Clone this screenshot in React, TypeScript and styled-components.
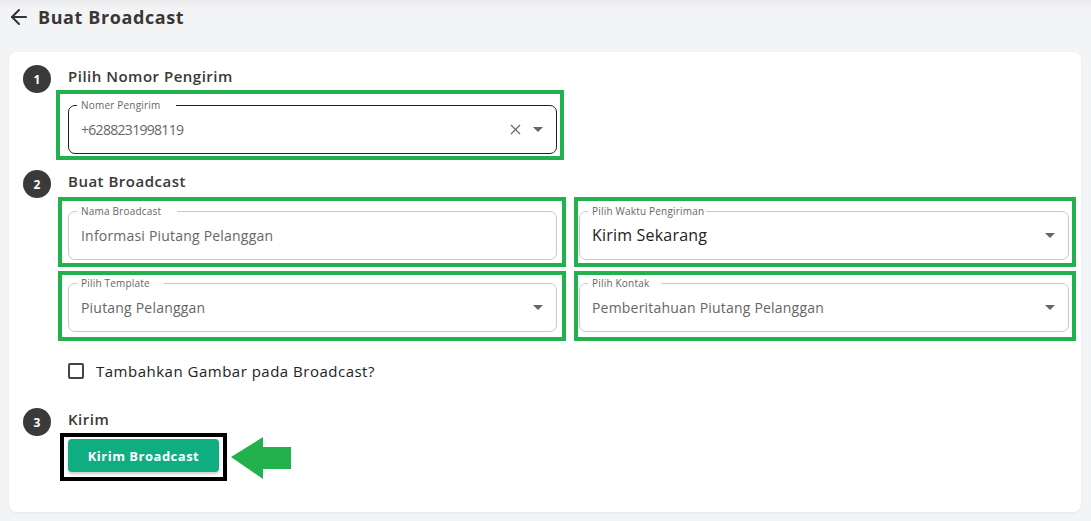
import React from 'react';
import styled, { createGlobalStyle } from 'styled-components';
import { ArrowLeft, X } from 'lucide-react';

const GlobalStyle = createGlobalStyle`
  body {
    margin: 0;
    background: #f3f4f6;
    font-family: "Open Sans", "Liberation Sans", sans-serif;
    color: #333;
  }
`;

const App = () => {
    return (
        <Page>
            <GlobalStyle />
            <Header>
                <BackButton><ArrowLeft size={24} strokeWidth={2} /></BackButton>
                <Title>Buat Broadcast</Title>
            </Header>

            <Card>
                <Step>
                    <StepNumber>1</StepNumber>
                    <StepBody>
                        <StepTitle>Pilih Nomor Pengirim</StepTitle>
                        <GreenBox $w={508} $pad="5px 3px 2px 8px" $ml={-12}>
                            <Field $dark $pl={12}>
                                <Legend $notch={15}>Nomer Pengirim</Legend>
                                <Value $tight>+6288231998119</Value>
                                <Icons>
                                    <X size={17} strokeWidth={1.6} color="#666" />
                                    <Caret />
                                </Icons>
                            </Field>
                        </GreenBox>
                    </StepBody>
                </Step>

                <Step>
                    <StepNumber>2</StepNumber>
                    <StepBody>
                        <StepTitle>Buat Broadcast</StepTitle>
                        <FieldGrid>
                            <GreenBox $pad="4px 5px 3px 6px">
                                <Field $pl={12}>
                                    <Legend $notch={16}>Nama Broadcast</Legend>
                                    <Value>Informasi Piutang Pelanggan</Value>
                                </Field>
                            </GreenBox>
                            <GreenBox $pad="4px 3px 3px 1px">
                                <Field $pl={12}>
                                    <Legend $notch={2}>Pilih Waktu Pengiriman</Legend>
                                    <Value $strong>Kirim Sekarang</Value>
                                    <Icons><Caret /></Icons>
                                </Field>
                            </GreenBox>
                            <GreenBox $pad="2px 5px 5px 6px">
                                <Field $pl={12}>
                                    <Legend $notch={14}>Pilih Template</Legend>
                                    <Value>Piutang Pelanggan</Value>
                                    <Icons><Caret /></Icons>
                                </Field>
                            </GreenBox>
                            <GreenBox $pad="2px 3px 5px 1px">
                                <Field $pl={12}>
                                    <Legend $notch={12}>Pilih Kontak</Legend>
                                    <Value>Pemberitahuan Piutang Pelanggan</Value>
                                    <Icons><Caret /></Icons>
                                </Field>
                            </GreenBox>
                        </FieldGrid>
                        <CheckRow>
                            <CheckBox />
                            <span>Tambahkan Gambar pada Broadcast?</span>
                        </CheckRow>
                    </StepBody>
                </Step>

                <Step>
                    <StepNumber>3</StepNumber>
                    <StepBody>
                        <StepTitle>Kirim</StepTitle>
                        <SendRow>
                            <BlackBox>
                                <SendButton>Kirim Broadcast</SendButton>
                            </BlackBox>
                            <svg width="60" height="44" viewBox="0 0 60 44">
                                <polygon points="0,22 32,2 32,12 60,12 60,34 32,34 32,44" fill="#22b14c" />
                            </svg>
                        </SendRow>
                    </StepBody>
                </Step>
            </Card>
        </Page>
    );
};

const Page = styled.div`
  min-height: 521px;
  padding: 0 10px 0 9px;
  background: linear-gradient(#eaeaec, #f3f4f6 10px);
`

const Header = styled.div`
  height: 34px;
  display: flex;
  align-items: center;
`

const BackButton = styled.span`
  display: flex;
  margin-left: -2px;
  color: #333;
`

const Title = styled.h1`
  margin: 0 0 0 7px;
  font-size: 18px;
  font-weight: 700;
  letter-spacing: 0.6px;
  color: #3b3734;
`

const Card = styled.div`
  margin-top: 18px;
  background: #fff;
  border-radius: 8px;
  padding: 14px 0 31px 14px;
  box-shadow: 0 1px 3px rgba(0, 0, 0, 0.06);
  display: flex;
  flex-direction: column;
  gap: 11px;
`

const Step = styled.div`
  display: grid;
  grid-template-columns: 28px 1fr;
  column-gap: 17px;
  align-items: start;
`

const StepNumber = styled.div`
  width: 28px;
  height: 28px;
  border-radius: 50%;
  background: #3a3a3a;
  color: #fff;
  font-size: 12px;
  font-weight: 700;
  display: flex;
  align-items: center;
  justify-content: center;
  margin-top: -1px;
`

const StepBody = styled.div`
  display: flex;
  flex-direction: column;
  align-items: flex-start;
`

const StepTitle = styled.div`
  font-size: 15px;
  line-height: 20px;
  font-weight: 600;
  letter-spacing: 0.5px;
  color: #3a3735;
  margin-bottom: 4px;
`

const GreenBox = styled.div<{ $w?: number; $pad: string; $ml?: number }>`
  box-sizing: border-box;
  width: ${p => (p.$w ? `${p.$w}px` : 'auto')};
  margin-left: ${p => p.$ml ?? 0}px;
  border: 4px solid #22b14c;
  padding: ${p => p.$pad};
`

const FieldGrid = styled.div`
  display: grid;
  grid-template-columns: 508px 502px;
  gap: 4px 8px;
  margin: 2px 0 0 -10px;
`

const Field = styled.fieldset<{ $dark?: boolean; $pl: number }>`
  box-sizing: border-box;
  margin: 0;
  min-width: 0;
  height: 55px;
  border: 1px solid ${p => (p.$dark ? '#1f1f1f' : '#c8c8c8')};
  border-radius: 7px;
  padding: 0 12px 6px ${p => p.$pl}px;
  display: flex;
  align-items: center;
`

const Legend = styled.legend<{ $notch: number }>`
  font-size: 10px;
  line-height: 12px;
  letter-spacing: 0.2px;
  color: #666;
  padding: 0 ${p => p.$notch}px 0 4px;
  margin-left: -4px;
`

const Value = styled.span<{ $strong?: boolean; $tight?: boolean }>`
  flex: 1;
  font-size: ${p => (p.$strong ? '16px' : '14px')};
  font-weight: ${p => (p.$strong ? 500 : 400)};
  letter-spacing: ${p => (p.$tight ? '-0.7px' : '0.2px')};
  color: ${p => (p.$strong ? '#222' : '#666')};
`

const Icons = styled.span`
  display: flex;
  align-items: center;
  gap: 8px;
`

const Caret = styled.span`
  width: 0;
  height: 0;
  margin: 0 1px;
  border-left: 5px solid transparent;
  border-right: 5px solid transparent;
  border-top: 5px solid #666;
`

const CheckRow = styled.label`
  display: flex;
  align-items: center;
  gap: 12px;
  margin: 20px 0 17px;
  font-size: 15px;
  font-weight: 500;
  letter-spacing: 0.5px;
  color: #222;
`

const CheckBox = styled.span`
  box-sizing: border-box;
  width: 16px;
  height: 16px;
  border: 2px solid #444;
  border-radius: 2px;
`

const SendRow = styled.div`
  display: flex;
  align-items: center;
  gap: 4px;
  margin-left: -8px;
`

const BlackBox = styled.div`
  border: 4px solid #000;
  padding: 2px 4px 5px 4px;
`

const SendButton = styled.button`
  width: 151px;
  height: 33px;
  border: none;
  border-radius: 4px;
  background: #0fae82;
  color: #fff;
  font-family: inherit;
  font-size: 13px;
  font-weight: 700;
  letter-spacing: 0.5px;
  box-shadow: 0 2px 3px rgba(0, 0, 0, 0.2);
`

export default App;
